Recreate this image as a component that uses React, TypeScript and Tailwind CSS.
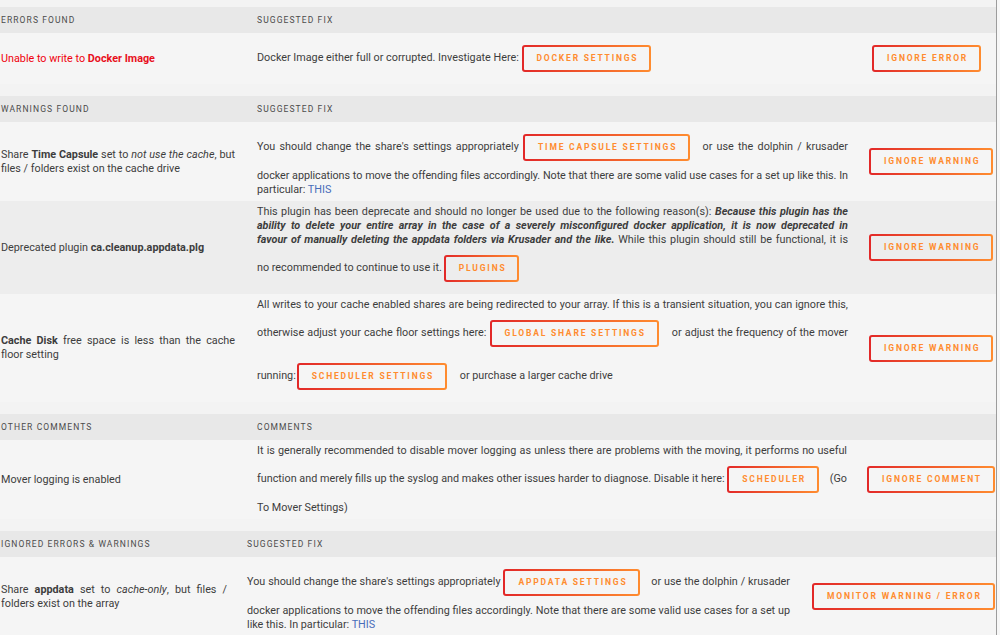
import React from "react";

type Tone = "light" | "dark";

const ROW_BG: Record<Tone, string> = {
  light: "bg-[#f5f5f5]",
  dark: "bg-[#ededed]",
};

function Btn({ label, tone = "light", className = "" }: { label: string; tone?: Tone; className?: string }) {
  const fill =
    tone === "dark"
      ? "[background:linear-gradient(#ededed,#ededed)_padding-box,linear-gradient(90deg,#e22828,#ff8c2f)_border-box]"
      : "[background:linear-gradient(#f5f5f5,#f5f5f5)_padding-box,linear-gradient(90deg,#e22828,#ff8c2f)_border-box]";
  return (
    <span
      className={`my-[8px] inline-flex h-[27px] items-center rounded-[3px] border-2 border-transparent pl-[13px] pr-[11px] align-middle text-[8.5px] font-bold uppercase leading-none tracking-[1.8px] text-[#ff8c2f] ${fill} ${className}`}
    >
      {label}
    </span>
  );
}

// a line stretched edge to edge, as in a justified paragraph
function J({ children, className = "" }: { children: React.ReactNode; className?: string }) {
  return <div className={`whitespace-nowrap text-justify [text-align-last:justify] ${className}`}>{children}</div>;
}

function L({ children }: { children: React.ReactNode }) {
  return <div>{children}</div>;
}

function Link({ children }: { children: React.ReactNode }) {
  return <span className="text-[#486dba]">{children}</span>;
}

function Header({ cols, left, mid }: { cols: string; left: string; mid: string }) {
  return (
    <div className={`grid ${cols} h-[26px] items-center bg-[#e8e8e8] text-[8.5px] uppercase tracking-[1.1px] text-[#4b4b4b]`}>
      <div className="pl-[1px]">{left}</div>
      <div>{mid}</div>
      <div />
    </div>
  );
}

function Row({
  cols,
  tone = "light",
  left,
  mid,
  right,
  leftPad = "pr-[22px]",
  midPad = "pr-[21px]",
}: {
  cols: string;
  tone?: Tone;
  left: React.ReactNode;
  mid: React.ReactNode;
  right: React.ReactNode;
  leftPad?: string;
  midPad?: string;
}) {
  return (
    <div className={`grid ${cols} ${ROW_BG[tone]} leading-[14px]`}>
      <div className={`flex min-w-0 flex-col justify-center pl-[1px] ${leftPad}`}>{left}</div>
      <div className={`min-w-0 py-[4px] ${midPad}`}>{mid}</div>
      <div className="flex items-center">{right}</div>
    </div>
  );
}

export default function App() {
  const errCols = "grid-cols-[257px_615px_1fr]";
  const warnCols = "grid-cols-[257px_612px_1fr]";
  const comCols = "grid-cols-[257px_610px_1fr]";
  const ignCols = "grid-cols-[247px_565px_1fr]";

  return (
    <div className="flex h-[635px] w-[1000px] overflow-hidden bg-[#f3f3f3] font-['Roboto','Noto_Sans',sans-serif] text-[10.8px] text-[#3d3d3d]">
      <div className="flex w-[996px] flex-col pt-[7px]">
        {/* errors */}
        <section className="mb-[12px]">
          <Header cols={errCols} left="Errors Found" mid="Suggested Fix" />
          <Row
            cols={errCols}
            left={
              <div className="text-[#f0000c]">
                Unable to write to <b className="font-bold text-[#e8101c]">Docker Image</b>
              </div>
            }
            mid={
              <L>
                Docker Image either full or corrupted. Investigate Here: <Btn label="Docker Settings" />
              </L>
            }
            right={<Btn label="Ignore Error" />}
          />
        </section>

        {/* warnings */}
        <section className="mb-[12px]">
          <Header cols={warnCols} left="Warnings Found" mid="Suggested Fix" />
          <Row
            cols={warnCols}
            left={
              <>
                <J>
                  Share <b className="font-bold">Time Capsule</b> set to <i>not use the cache</i>, but
                </J>
                <L>files / folders exist on the cache drive</L>
              </>
            }
            mid={
              <>
                <J>
                  You should change the share's settings appropriately <Btn label="Time Capsule Settings" className="mr-[8px]" /> or use
                  the dolphin / krusader
                </J>
                <J className="tracking-[-0.06px]">
                  docker applications to move the offending files accordingly. Note that there are some valid use cases for a set up
                  like this. In
                </J>
                <L>
                  particular: <Link>THIS</Link>
                </L>
              </>
            }
            right={<Btn label="Ignore Warning" />}
          />
          <Row
            cols={warnCols}
            tone="dark"
            left={
              <L>
                Deprecated plugin <b className="font-bold">ca.cleanup.appdata.plg</b>
              </L>
            }
            mid={
              <>
                <J>
                  This plugin has been deprecate and should no longer be used due to the following reason(s):{" "}
                  <b className="font-bold italic">Because this plugin has the</b>
                </J>
                <J>
                  <b className="font-bold italic">
                    ability to delete your entire array in the case of a severely misconfigured docker application, it is now deprecated in
                  </b>
                </J>
                <J>
                  <b className="font-bold italic">favour of manually deleting the appdata folders via Krusader and the like.</b> While this
                  plugin should still be functional, it is
                </J>
                <L>
                  no recommended to continue to use it.
                  <Btn label="Plugins" tone="dark" className="ml-[2px]" />
                </L>
              </>
            }
            right={<Btn label="Ignore Warning" tone="dark" />}
          />
          <Row
            cols={warnCols}
            left={
              <>
                <J>
                  <b className="font-bold">Cache Disk</b> free space is less than the cache
                </J>
                <L>floor setting</L>
              </>
            }
            mid={
              <>
                <J>
                  All writes to your cache enabled shares are being redirected to your array. If this is a transient situation, you can
                  ignore this,
                </J>
                <J>
                  otherwise adjust your cache floor settings here: <Btn label="Global Share Settings" className="mr-[10px]" /> or adjust
                  the frequency of the mover
                </J>
                <L>
                  running:
                  <Btn label="Scheduler Settings" className="ml-[1px] mr-[10px]" /> or purchase a larger cache drive
                </L>
              </>
            }
            right={<Btn label="Ignore Warning" />}
          />
        </section>

        {/* other comments */}
        <section className="mb-[12px]">
          <Header cols={comCols} left="Other Comments" mid="Comments" />
          <Row
            cols={comCols}
            midPad="pr-[20px]"
            left={<L>Mover logging is enabled</L>}
            mid={
              <>
                <J>
                  It is generally recommended to disable mover logging as unless there are problems with the moving, it performs no
                  useful
                </J>
                <J>
                  function and merely fills up the syslog and makes other issues harder to diagnose. Disable it here:{" "}
                  <Btn label="Scheduler" className="mr-[8px]" /> (Go
                </J>
                <L>To Mover Settings)</L>
              </>
            }
            right={<Btn label="Ignore Comment" />}
          />
        </section>

        {/* ignored */}
        <section>
          <Header cols={ignCols} left="Ignored Errors & Warnings" mid="Suggested Fix" />
          <Row
            cols={ignCols}
            leftPad="pr-[20px]"
            midPad="pr-[22px]"
            left={
              <>
                <J>
                  Share <b className="font-bold">appdata</b> set to <i>cache-only</i>, but files /
                </J>
                <L>folders exist on the array</L>
              </>
            }
            mid={
              <>
                <J>
                  You should change the share's settings appropriately <Btn label="Appdata Settings" className="mr-[8px]" /> or use the
                  dolphin / krusader
                </J>
                <J>
                  docker applications to move the offending files accordingly. Note that there are some valid use cases for a set up
                </J>
                <L>
                  like this. In particular: <Link>THIS</Link>
                </L>
              </>
            }
            right={<Btn label="Monitor Warning / Error" />}
          />
        </section>
      </div>
      <div className="w-px shrink-0 bg-[#9c9c9c]" />
      <div className="flex-1 bg-[#f7f7f7]" />
    </div>
  );
}
